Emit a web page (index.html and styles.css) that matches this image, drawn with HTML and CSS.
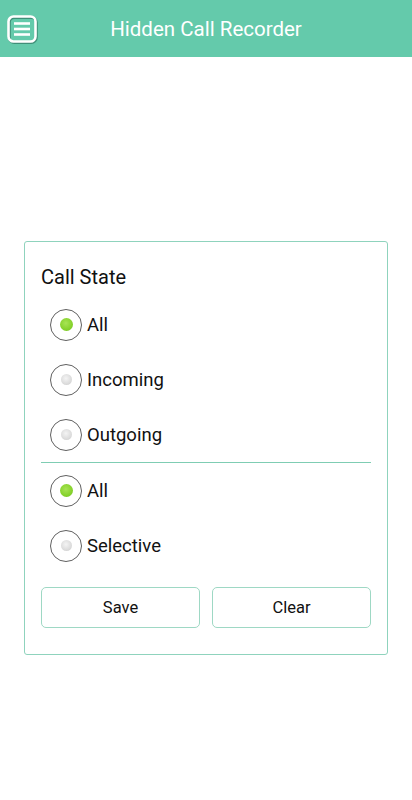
FILE: index.html
```html
<!DOCTYPE html>
<html>
<head>
<meta charset="utf-8">
<link rel="stylesheet" href="styles.css">
</head>
<body>
<header class="appbar">
  <svg class="menu-icon" width="32" height="30" viewBox="0 0 32 30">
    <rect x="2.5" y="2.5" width="27" height="25" rx="5" fill="none" stroke="#3f8f78" stroke-width="3" transform="translate(0.8,1)"/>
    <rect x="2.5" y="2.5" width="27" height="25" rx="5" fill="none" stroke="#ffffff" stroke-width="2.6"/>
    <line x1="8" y1="9.5" x2="24" y2="9.5" stroke="#ffffff" stroke-width="2.6"/>
    <line x1="8" y1="15" x2="24" y2="15" stroke="#ffffff" stroke-width="2.6"/>
    <line x1="8" y1="20.5" x2="24" y2="20.5" stroke="#ffffff" stroke-width="2.6"/>
  </svg>
  <div class="title">Hidden Call Recorder</div>
</header>

<main class="content">
  <section class="card">
    <div class="card-title">Call State</div>
    <div class="group">
      <div class="row"><span class="radio checked"></span><span class="label">All</span></div>
      <div class="row"><span class="radio"></span><span class="label">Incoming</span></div>
      <div class="row"><span class="radio"></span><span class="label">Outgoing</span></div>
    </div>
    <div class="divider"></div>
    <div class="group">
      <div class="row"><span class="radio checked"></span><span class="label">All</span></div>
      <div class="row"><span class="radio"></span><span class="label">Selective</span></div>
    </div>
    <div class="buttons">
      <button class="btn">Save</button>
      <button class="btn">Clear</button>
    </div>
  </section>
</main>
</body>
</html>
```

FILE: styles.css
```css
html, body {
  margin: 0;
  padding: 0;
  background: #ffffff;
  font-family: Roboto, "Noto Sans", "Liberation Sans", sans-serif;
}

.appbar {
  height: 57px;
  background: #64caab;
  display: flex;
  align-items: center;
  position: relative;
}

.menu-icon {
  margin-left: 6px;
  margin-top: 1px;
}

.title {
  flex: 1;
  text-align: center;
  color: #ffffff;
  font-size: 20.5px;
  margin-right: 38px;
  margin-top: 1px;
}

.content {
  padding: 184px 24px 0 24px;
}

.card {
  border: 1px solid #8fd3bd;
  border-radius: 3px;
  padding: 21px 16px 26px 16px;
}

.card-title {
  font-size: 20px;
  color: #111111;
  line-height: 28px;
  margin-bottom: 6px;
}

.row {
  height: 55px;
  display: flex;
  align-items: center;
}

.radio {
  width: 30px;
  height: 30px;
  border: 1.6px solid #606060;
  border-radius: 50%;
  margin-left: 9px;
  margin-right: 5px;
  display: flex;
  align-items: center;
  justify-content: center;
  box-sizing: content-box;
}

.radio::after {
  content: "";
  width: 11px;
  height: 11px;
  border-radius: 50%;
  background: radial-gradient(circle at 45% 40%, #f4f4f4 0%, #dcdcdc 60%, #c8c8c8 100%);
}

.radio.checked::after {
  width: 13px;
  height: 13px;
  background: radial-gradient(circle at 45% 40%, #a8e455 0%, #86d22c 60%, #6fbf1f 100%);
}

.label {
  font-size: 18.5px;
  color: #111111;
}

.divider {
  height: 1px;
  background: #7fcdb3;
}

.buttons {
  display: grid;
  grid-template-columns: 1fr 1fr;
  gap: 12px;
  margin-top: 14px;
}

.btn {
  height: 41px;
  background: #ffffff;
  border: 1px solid #9ed8c4;
  border-radius: 5px;
  font-family: Roboto, "Noto Sans", "Liberation Sans", sans-serif;
  font-size: 16.5px;
  color: #111111;
  padding: 0;
}
```
